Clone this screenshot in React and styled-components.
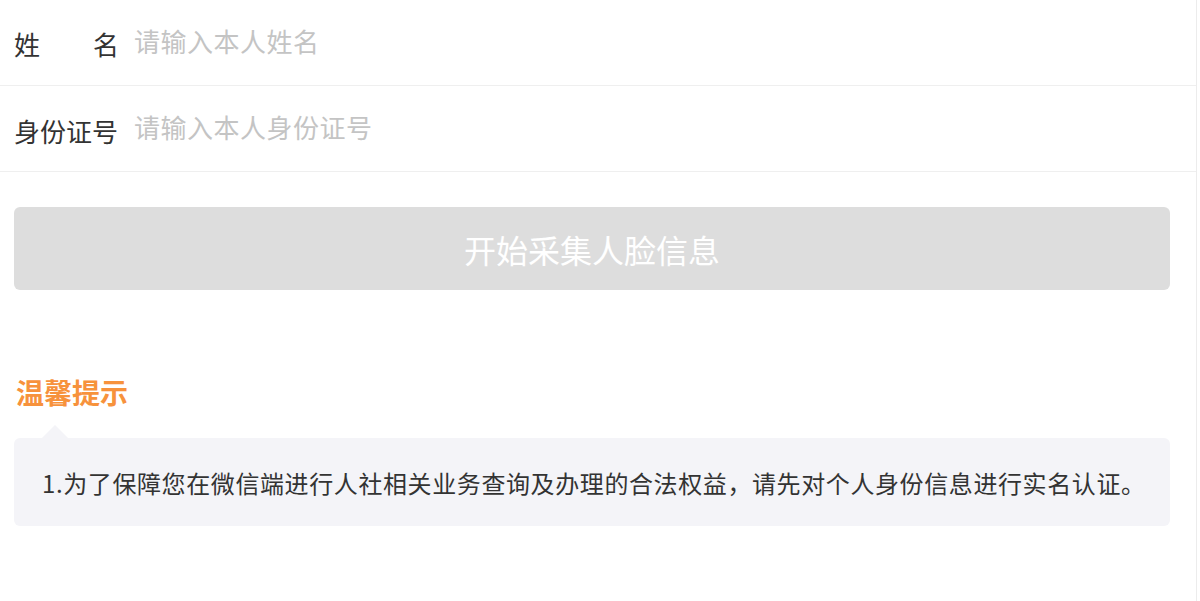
import styled, { createGlobalStyle } from "styled-components";

const GlobalStyle = createGlobalStyle`
  html, body {
    margin: 0;
    padding: 0;
    background: #ffffff;
  }
  body {
    font-family: "Noto Sans CJK SC", "Noto Sans", sans-serif;
  }
`;

const Page = styled.div`
  width: 1196px;
  height: 601px;
  border-right: 1px solid #ececec;
  background: #ffffff;
  overflow: hidden;
`;

const Form = styled.div`
  display: flex;
  flex-direction: column;
`;

const FieldRow = styled.div`
  display: flex;
  align-items: center;
  height: 85px;
  padding-left: 14px;
  border-bottom: 1px solid #efefef;
`;

const Label = styled.label`
  width: 105px;
  flex-shrink: 0;
  display: flex;
  justify-content: ${(p) => (p.$spread ? "space-between" : "flex-start")};
  white-space: nowrap;
  font-size: 26px;
  color: #333333;
  margin-top: ${(p) => (p.$spread ? "2px" : "4px")};
`;

const Input = styled.input`
  flex: 1;
  border: none;
  outline: none;
  background: transparent;
  margin-left: 15px;
  font-family: inherit;
  font-size: 26px;
  letter-spacing: 0.5px;
  color: #333333;
  padding: 0;
  margin-top: -4px;

  &::placeholder {
    color: #c4c4c4;
  }
`;

const Actions = styled.div`
  padding: 35px 26px 0 14px;
`;

const SubmitButton = styled.button`
  width: 100%;
  height: 83px;
  border: none;
  border-radius: 6px;
  background: #dddddd;
  color: #ffffff;
  font-family: inherit;
  font-size: 32px;
  padding: 0;
  cursor: not-allowed;
`;

const Tips = styled.div`
  padding: 84px 26px 0 14px;
`;

const TipsTitle = styled.h4`
  margin: 0 0 0 2px;
  font-size: 28px;
  font-weight: 700;
  color: #f7923c;
  line-height: 36px;
`;

const TipsBox = styled.div`
  position: relative;
  margin-top: 28px;
  height: 88px;
  display: flex;
  align-items: center;
  padding-left: 28px;
  border-radius: 6px;
  background: #f4f4f8;
  font-size: 24px;
  letter-spacing: 0.6px;
  color: #333333;

  &::before {
    content: "";
    position: absolute;
    top: -13px;
    left: 28px;
    border-left: 13px solid transparent;
    border-right: 13px solid transparent;
    border-bottom: 13px solid #f4f4f8;
  }
`;

const App = () => {
  return (
    <Page>
      <GlobalStyle />
      <Form>
        <FieldRow>
          <Label $spread>
            <span>姓</span>
            <span>名</span>
          </Label>
          <Input type="text" placeholder="请输入本人姓名" />
        </FieldRow>
        <FieldRow>
          <Label>身份证号</Label>
          <Input type="text" placeholder="请输入本人身份证号" />
        </FieldRow>
      </Form>
      <Actions>
        <SubmitButton disabled>开始采集人脸信息</SubmitButton>
      </Actions>
      <Tips>
        <TipsTitle>温馨提示</TipsTitle>
        <TipsBox>
          1.为了保障您在微信端进行人社相关业务查询及办理的合法权益，请先对个人身份信息进行实名认证。
        </TipsBox>
      </Tips>
    </Page>
  );
};

export default App;
